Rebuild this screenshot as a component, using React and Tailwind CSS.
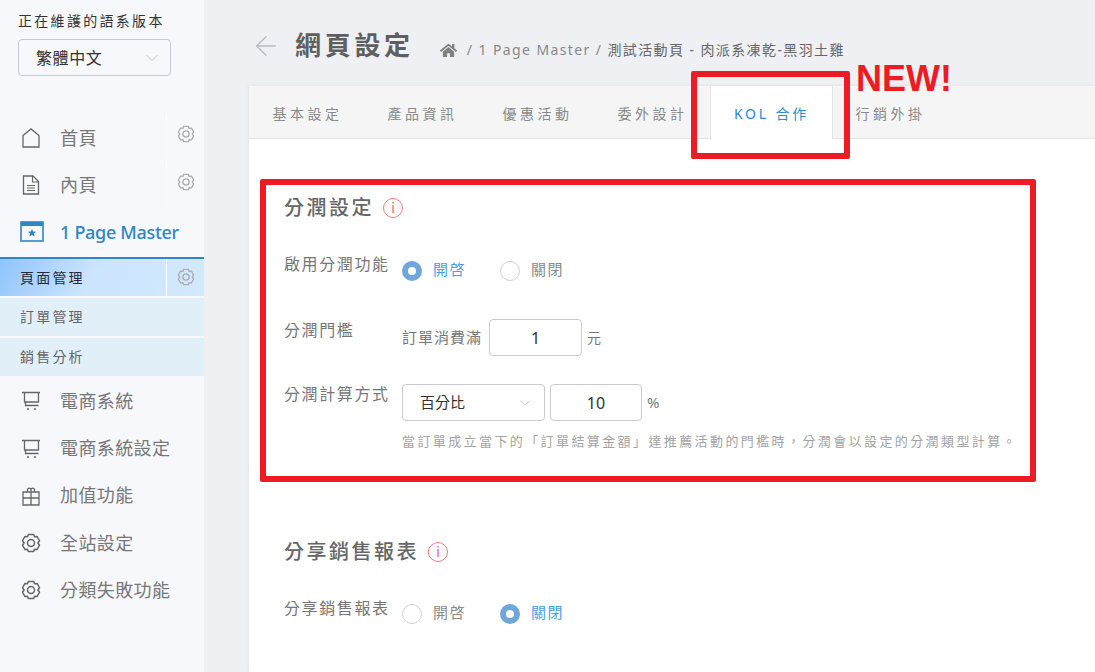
import React from 'react';
import { ChevronDown, ArrowLeft } from 'lucide-react';
import { FaHome } from 'react-icons/fa';

const cjk = 'font-["Noto_Sans","Noto_Sans_CJK_TC",sans-serif]';

const Cog = ({ className = '' }) => (
  <svg viewBox="0 0 24 24" className={className} fill="none" stroke="currentColor" strokeWidth="1.8" strokeLinejoin="round">
    <path d="M8.800 1.800h6.400l1 2.800 3-.5 3 5.200-1.900 2.700 1.900 2.700-3 5.200-3-.5-1 2.800H8.800l-1-2.800-3 .5-3-5.200L3.700 12 1.800 9.300l3-5.200 3 .5z" />
    <circle cx="12" cy="12" r="4.200" />
  </svg>
);

const HouseIcon = () => (
  <svg viewBox="0 0 20 20" className="w-[20px] h-[20px] text-[#666]" fill="none" stroke="currentColor" strokeWidth="1.300">
    <path d="M2 7.500L10 .9l8 6.600V19H2z" />
  </svg>
);

const DocIcon = () => (
  <svg viewBox="0 0 20 20" className="w-[20px] h-[20px] text-[#666]" fill="none" stroke="currentColor" strokeWidth="1.300">
    <path d="M2.500 1h9.500l5.500 5.500V19h-15z" />
    <path d="M11.500 1v6h6M6 10.500h8M6 13h8M6 15.500h8" strokeWidth="1.100" />
  </svg>
);

const CartIcon = () => (
  <svg viewBox="0 0 20 20" className="w-[20px] h-[20px] text-[#666]" fill="none" stroke="currentColor" strokeWidth="1.300">
    <path d="M1 1.500h18M3.500 1.500v9.500h14V1.500M4.500 11v3.500h13" />
    <path d="M6 18h2M13 18h2" strokeWidth="1.600" />
  </svg>
);

const GiftIcon = () => (
  <svg viewBox="0 0 20 20" className="w-[20px] h-[20px] text-[#666]" fill="none" stroke="currentColor" strokeWidth="1.300">
    <path d="M2 6h16v13H2zM2 12h16M10 6v13M6.500 6V3.500A1.800 1.800 0 0 1 10 3.500V6M10 6V3.500a1.800 1.800 0 0 1 3.500 0V6" />
  </svg>
);

const PageIcon = () => (
  <svg viewBox="0 0 24 22" className="w-[24px] h-[22px] text-[#2f86c5]">
    <rect x="1" y="1" width="22" height="19" fill="none" stroke="currentColor" strokeWidth="1.600" />
    <rect x="1" y="1" width="22" height="4" fill="currentColor" />
    <path fill="currentColor" d="M12 8l1.200 2.500 2.800.3-2 1.900.6 2.800-2.600-1.400-2.600 1.400.6-2.800-2-1.900 2.800-.3z" />
  </svg>
);

const MenuRow = ({ icon, label, gear }) => (
  <div className="flex items-stretch h-[47.300px]">
    <div className="w-[20px] shrink-0 ml-[21px] flex items-center">{icon}</div>
    <div className="ml-[19px] flex-1 flex items-center text-[18px] tracking-[0.400px] text-[#777]">{label}</div>
    {gear && (
      <div className="w-[38px] border-l border-white flex items-start justify-center pt-[10px] my-[1px]">
        <Cog className="w-[18px] h-[18px] text-[#adadb2]" />
      </div>
    )}
  </div>
);

const SubRow = ({ label }) => (
  <div className="h-[38px] mb-[2px] bg-[#e1eff9] pl-[20px] flex items-center text-[14px] tracking-[2.200px] text-[#666]">{label}</div>
);

const Radio = ({ checked, label, className = '' }) => (
  <div className={`flex items-center ${className}`}>
    {checked ? (
      <span className="w-[20px] h-[20px] rounded-full border-[6px] border-[#6fa6dc] bg-white" />
    ) : (
      <span className="w-[20px] h-[20px] rounded-full border border-[#cfd0da] bg-white" />
    )}
    <span className={`ml-[11px] pb-[3px] text-[15px] tracking-[1.500px] ${checked ? 'text-[#4a9eea]' : 'text-[#8a8a8a]'}`}>{label}</span>
  </div>
);

const Info = () => (
  <span className="ml-[9px] w-[20px] h-[20px] rounded-full border border-[#f47c7c] text-[#f06a6a] flex items-center justify-center text-[14px] leading-none">i</span>
);

const Tab = ({ label, active }) =>
  active ? (
    <div className="w-[123px] pt-[2px] border-x border-[#e4e4e4] bg-white -mb-px flex items-center justify-center text-[14px] tracking-[2.800px] text-[#2b8ad6]">{label}</div>
  ) : (
    <div className="px-[22.500px] pt-[2px] flex items-center text-[14px] tracking-[3.500px] text-[#8a8a8a]">{label}</div>
  );

export default function App() {
  return (
    <div className={`relative w-[1095px] h-[672px] overflow-hidden flex bg-[#eff0f4] ${cjk}`}>
      <aside className="w-[204px] shrink-0 bg-[#f7f8fb] pt-[11px]">
        <div className="pl-[18px] text-[14px] tracking-[2.300px] text-[#333] leading-[20px]">正在維護的語系版本</div>
        <div className="ml-[18px] mt-[8px] w-[153px] h-[37px] rounded-[4px] border border-[#c9cad4] flex items-center justify-between pl-[17px] pr-[8px] text-[16px] tracking-[0.600px] text-[#333]">
          繁體中文
          <ChevronDown className="w-[20px] h-[20px] text-[#b9b9c0]" strokeWidth={1} />
        </div>
        <div className="mt-[38.400px]">
          <MenuRow icon={<HouseIcon />} label="首頁" gear />
          <MenuRow icon={<DocIcon />} label="內頁" gear />
          <div className="h-[47.600px] pb-[1px] flex items-center">
            <div className="ml-[20px] w-[24px]"><PageIcon /></div>
            <span className="ml-[16px] text-[18px] font-medium tracking-[-0.300px] text-[#2f86c5]">1 Page Master</span>
          </div>
          <div className="border-t-[2px] border-[#2f86c5] h-[39px] mb-[2px] flex bg-[linear-gradient(120deg,#8fc3fb_0%,#cbe5fe_45%,#d3e9fc_100%)]">
            <div className="flex-1 pl-[20px] flex items-center text-[14px] tracking-[2.200px] text-[#1d2a44]">頁面管理</div>
            <div className="w-[38px] border-l border-white flex items-center justify-center">
              <Cog className="w-[18px] h-[18px] text-[#adadb2]" />
            </div>
          </div>
          <SubRow label="訂單管理" />
          <SubRow label="銷售分析" />
          <MenuRow icon={<CartIcon />} label="電商系統" />
          <MenuRow icon={<CartIcon />} label="電商系統設定" />
          <MenuRow icon={<GiftIcon />} label="加值功能" />
          <MenuRow icon={<Cog className="w-[20px] h-[20px] text-[#666]" />} label="全站設定" />
          <MenuRow icon={<Cog className="w-[20px] h-[20px] text-[#666]" />} label="分類失敗功能" />
        </div>
      </aside>

      <main className="flex-1 pl-[45px] min-w-0">
        <div className="h-[86px] flex items-start pt-[26px]">
          <ArrowLeft className="ml-[1px] mt-[4px] w-[32px] h-[32px] text-[#b9bbc1]" strokeWidth={1} />
          <h1 className="ml-[13px] mt-[1px] text-[26px] font-bold tracking-[3.700px] leading-[36px] text-[#5f5f5f]">網頁設定</h1>
          <div className="ml-[26px] mt-[9px] flex items-center text-[14px] leading-[30px] text-[#888]">
            <FaHome className="w-[17px] h-[17px] text-[#808080]" />
            <span className="ml-[10px] tracking-[1.400px]">/ 1 Page Master /</span>
            <span className="ml-[5px] text-[14px] tracking-[1.400px] text-[#666]">測試活動頁 - 肉派系凍乾-黑羽土雞</span>
          </div>
        </div>

        <div className="bg-white h-[586px] shadow-[0_0_4px_rgba(0,0,0,0.08)]">
          <div className="h-[53px] pl-[1px] flex bg-[#f5f5f5] border-b border-[#e4e4e4]">
            <Tab label="基本設定" />
            <Tab label="產品資訊" />
            <Tab label="優惠活動" />
            <Tab label="委外設計" />
            <Tab label="KOL 合作" active />
            <Tab label="行銷外掛" />
          </div>

          <div className="pl-[35px]">
            <section className="pt-[55px]">
              <div className="flex items-center h-[28px]">
                <h2 className="text-[20px] font-medium tracking-[2.500px] text-[#666]">分潤設定</h2>
                <Info />
              </div>
              <div className="mt-[27px] flex items-start h-[36px]">
                <div className="w-[118px] text-[16px] tracking-[1.600px] text-[#777] leading-[30px]">啟用分潤功能</div>
                <Radio checked label="開啓" className="mt-[9px]" />
                <Radio label="關閉" className="mt-[9px] ml-[34px]" />
              </div>
              <div className="mt-[34px] flex items-start h-[37px]">
                <div className="w-[118px] -mt-[1px] text-[16px] tracking-[1.600px] text-[#777] leading-[24px]">分潤門檻</div>
                <div className="flex items-center">
                  <span className="text-[15px] tracking-[1px] text-[#777]">訂單消費滿</span>
                  <div className="ml-[7px] w-[93px] h-[37px] rounded-[4px] border border-[#c9cad4] flex items-center justify-center text-[16px] text-[#333]">1</div>
                  <span className="ml-[5px] text-[14px] text-[#777]">元</span>
                </div>
              </div>
              <div className="mt-[28px] flex items-start">
                <div className="w-[118px] -mt-[2px] text-[16px] tracking-[1.600px] text-[#777] leading-[24px]">分潤計算方式</div>
                <div>
                  <div className="flex items-center">
                    <div className="w-[143px] h-[37px] rounded-[4px] border border-[#c9cad4] flex items-center justify-between pl-[17px] pr-[10px] text-[15px] text-[#333]">
                      百分比
                      <ChevronDown className="w-[18px] h-[18px] text-[#b9b9c0]" strokeWidth={1} />
                    </div>
                    <div className="ml-[5px] w-[92px] h-[37px] rounded-[4px] border border-[#c9cad4] flex items-center justify-center text-[16px] text-[#333]">10</div>
                    <span className="ml-[5px] text-[15px] text-[#777]">%</span>
                  </div>
                  <p className="mt-[11px] text-[13px] tracking-[2.400px] leading-[18px] text-[#a3a3a3] whitespace-nowrap">當訂單成立當下的「訂單結算金額」達推薦活動的門檻時，分潤會以設定的分潤類型計算。</p>
                </div>
              </div>
            </section>

            <section className="pt-[88px]">
              <div className="flex items-center h-[28px]">
                <h2 className="text-[20px] font-medium tracking-[2.500px] text-[#666]">分享銷售報表</h2>
                <Info />
              </div>
              <div className="mt-[30px] flex items-start">
                <div className="w-[118px] text-[16px] tracking-[1.600px] text-[#777] leading-[24px]">分享銷售報表</div>
                <Radio label="開啓" className="mt-[5px]" />
                <Radio checked label="關閉" className="mt-[5px] ml-[34px]" />
              </div>
            </section>
          </div>
        </div>
      </main>

      {/* annotation boxes drawn over the screenshot */}
      <div className="absolute left-[691px] top-[71px] w-[159px] h-[88px] border-[6px] border-[#ed1c24] rounded-[2px]" />
      <div className="absolute left-[260px] top-[179px] w-[776px] h-[303px] border-[6px] border-[#ed1c24] rounded-[2px]" />
      <div className="absolute left-[856px] top-[57px] text-[36px] leading-[44px] font-['Liberation_Sans',sans-serif] font-bold text-[#ed1c24]">NEW!</div>
    </div>
  );
}
